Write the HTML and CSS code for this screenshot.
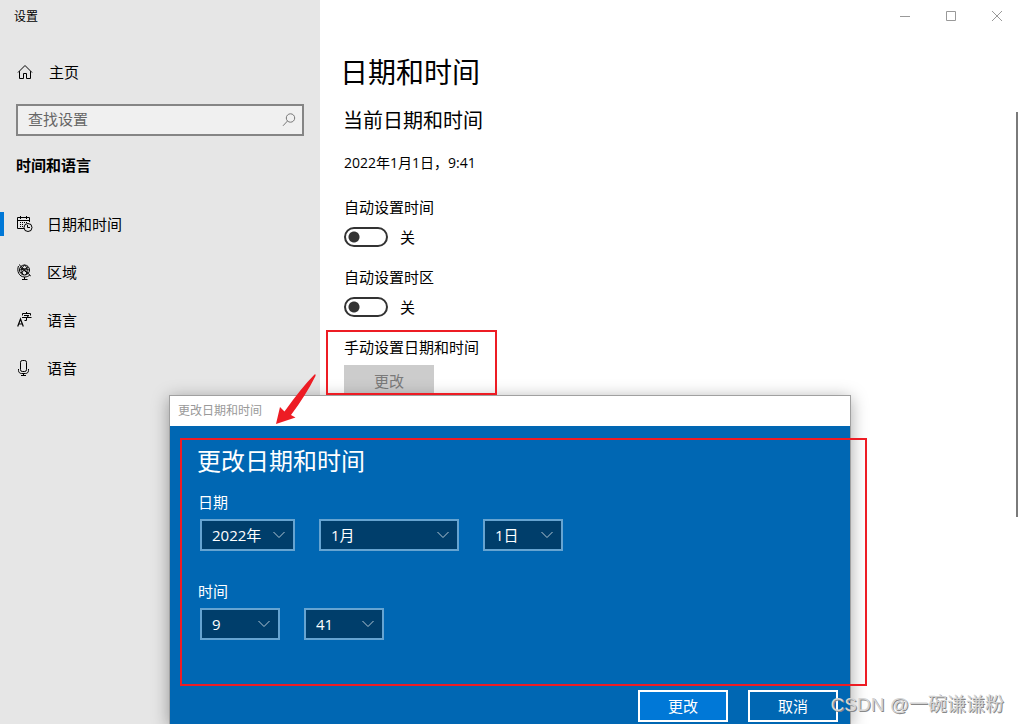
FILE: index.html
```html
<!DOCTYPE html>
<html lang="zh-CN">
<head>
<meta charset="utf-8">
<title>设置</title>
<link rel="stylesheet" href="styles.css">
</head>
<body>
<div class="window">
  <aside class="sidebar">
    <div class="app-title">设置</div>
    <a class="home" href="#">
      <svg class="icon" width="16" height="16" viewBox="0 0 16 16"><path d="M1 8.500 8 1.500 15 8.500M2.500 7.200V14.500H6.500V9.500H9.500V14.500H13.500V7.200"/></svg>
      <span>主页</span>
    </a>
    <div class="search">
      <input class="search-input" type="text" placeholder="查找设置" aria-label="查找设置">
      <svg class="search-icon" width="14" height="14" viewBox="0 0 14 14"><circle cx="8.500" cy="5" r="4.200"/><path d="M5.500 8 1 12.800"/></svg>
    </div>
    <h2 class="group">时间和语言</h2>
    <nav class="nav">
      <a class="nav-item nav-item-active" href="#">
        <svg class="icon" width="16" height="16" viewBox="0 0 16 16"><path d="M7 12.500H.5V1.500H12.500V6M.5 4.500H12.500M3.500 0V3M9.500 0V3"/><path d="M3 6.500H10M3 8.500H7M3 10.500H6" stroke-dasharray="1 1"/><circle cx="11" cy="11.500" r="4"/><path d="M10.500 9V11.500H13"/></svg>
        <span>日期和时间</span>
      </a>
      <a class="nav-item" href="#">
        <svg class="icon" width="16" height="16" viewBox="0 0 16 16"><circle cx="7.500" cy="6" r="5"/><path d="M3.500 3.500 11 9.500M4 9 11 2.800M7.500 1C3.800 4 4.300 8.500 6.500 11M7.500 1C11.200 4 10.700 8.500 8.500 11M2.500 6.500C5 4.200 10 4.200 12.500 6.500M2 .5 13.800 12M1.500 2C-.5 7 2 12.800 7.500 13 10 13 11.500 12.200 13 10.800M7.500 13V15M5 15.500H10.500"/></svg>
        <span>区域</span>
      </a>
      <a class="nav-item" href="#">
        <svg class="icon" width="16" height="16" viewBox="0 0 16 16"><path class="stroke-bold" d="M.7 14.500 3.500 7 6.300 14.500M1.700 12H5.300"/><path d="M9.500 0V1.500M5.500 3.500V1.500H13.500V3.500M7 3.500H12L9.500 5.500V8.500H7.500M5 5.500H14.500"/></svg>
        <span>语言</span>
      </a>
      <a class="nav-item" href="#">
        <svg class="icon" width="16" height="16" viewBox="0 0 16 16"><rect x="3.500" y=".5" width="6" height="11" rx="1.800"/><path d="M1.500 9V10.500C1.500 12.500 3 13.500 4.500 13.500H8.500C10 13.500 11.500 12.500 11.500 10.500V9M6.500 13.500V15.500M4 15.500H9"/></svg>
        <span>语音</span>
      </a>
    </nav>
  </aside>

  <div class="page">
    <div class="controls">
      <button class="control" aria-label="最小化"><svg width="10" height="10" viewBox="0 0 10 10"><path d="M0 5.500H10"/></svg></button>
      <button class="control" aria-label="最大化"><svg width="10" height="10" viewBox="0 0 10 10"><path d="M.5.5H9.500V9.500H.5Z"/></svg></button>
      <button class="control" aria-label="关闭"><svg width="10" height="10" viewBox="0 0 10 10"><path d="M0 0 10 10M10 0 0 10"/></svg></button>
    </div>
    <div class="scroll-area">
      <main class="content">
        <h1 class="title">日期和时间</h1>
        <h2 class="subtitle">当前日期和时间</h2>
        <p class="now">2022年1月1日，9:41</p>
        <div class="setting">
          <label for="auto-time">自动设置时间</label>
          <div class="toggle-row"><input class="toggle" id="auto-time" type="checkbox" role="switch"><span>关</span></div>
        </div>
        <div class="setting">
          <label for="auto-zone">自动设置时区</label>
          <div class="toggle-row"><input class="toggle" id="auto-zone" type="checkbox" role="switch"><span>关</span></div>
        </div>
        <div class="setting">
          <span id="manual">手动设置日期和时间</span>
          <button class="change" aria-describedby="manual" disabled>更改</button>
        </div>
      </main>
      <div class="rail"><div class="thumb"></div></div>
    </div>
  </div>

  <section class="dialog" role="dialog" aria-labelledby="dialog-title">
    <div class="dialog-bar">更改日期和时间</div>
    <div class="dialog-body">
      <h2 class="dialog-title" id="dialog-title">更改日期和时间</h2>
      <fieldset class="fields">
        <legend class="legend">日期</legend>
        <div class="selects">
          <div class="select select-year"><select aria-label="年"><option>2022年</option></select><svg class="chevron" width="12" height="8" viewBox="0 0 12 8"><path d="M.5 1 6 6.500 11.500 1"/></svg></div>
          <div class="select select-month"><select aria-label="月"><option>1月</option></select><svg class="chevron" width="12" height="8" viewBox="0 0 12 8"><path d="M.5 1 6 6.500 11.500 1"/></svg></div>
          <div class="select"><select aria-label="日"><option>1日</option></select><svg class="chevron" width="12" height="8" viewBox="0 0 12 8"><path d="M.5 1 6 6.500 11.500 1"/></svg></div>
        </div>
      </fieldset>
      <fieldset class="fields">
        <legend class="legend">时间</legend>
        <div class="selects">
          <div class="select"><select aria-label="时"><option>9</option></select><svg class="chevron" width="12" height="8" viewBox="0 0 12 8"><path d="M.5 1 6 6.500 11.500 1"/></svg></div>
          <div class="select"><select aria-label="分"><option>41</option></select><svg class="chevron" width="12" height="8" viewBox="0 0 12 8"><path d="M.5 1 6 6.500 11.500 1"/></svg></div>
        </div>
      </fieldset>
      <div class="actions">
        <button class="action action-primary">更改</button>
        <button class="action">取消</button>
      </div>
    </div>
  </section>

  <div class="mark mark-setting"></div>
  <div class="mark mark-dialog"></div>
  <svg class="arrow" width="42" height="54" viewBox="0 0 42 54"><path d="M0 51 4 34 8.500 38.500Q26 14 38.500 1.500Q40 .5 39.500 3 30 22 15 42L19.500 44.500Z"/></svg>
  <div class="watermark">CSDN @一碗谦谦粉</div>
</div>
</body>
</html>
```
FILE: styles.css
```css
* {
  box-sizing: border-box;
}

body {
  margin: 0;
  color: #000;
  font: 15px/24px "Noto Sans CJK SC", sans-serif;
}

h1,
h2,
p {
  margin: 0;
  font-weight: 400;
}

button,
input,
select {
  font: inherit;
}

a {
  color: inherit;
  text-decoration: none;
}

.window {
  position: relative;
  display: flex;
  height: 100vh;
  overflow: hidden;
  background: #fff;
}

/* Sidebar */
.sidebar {
  flex: 0 0 320px;
  background: #e6e6e6;
}

.app-title {
  height: 32px;
  padding-left: 14px;
  font-size: 12px;
  line-height: 32px;
}

.icon {
  fill: none;
  stroke: #000;
  flex: none;
}

.stroke-bold {
  stroke-width: 1.2;
}

.home,
.nav-item {
  display: flex;
  align-items: center;
  height: 48px;
  padding-left: 17px;
  gap: 14px;
}

.home {
  margin-top: 16px;
  gap: 16px;
}

.search {
  display: flex;
  align-items: center;
  height: 32px;
  margin: 8px 16px 14px;
  padding: 0 6px 0 10px;
  border: 2px solid #858585;
  background: #f0f0f0;
}

.search-input {
  flex: 1;
  min-width: 0;
  padding: 0 0 2px;
  border: 0;
  outline: 0;
  background: none;
}

.search-input::placeholder {
  color: #666;
  opacity: 1;
}

.search-icon {
  fill: none;
  stroke: #777;
}

.group {
  padding-left: 16px;
  font-size: 15px;
  font-weight: 700;
  line-height: 30px;
}

.nav {
  margin-top: 20px;
}

.nav-item-active {
  background: linear-gradient(#0078d7, #0078d7) 0 50% / 4px 24px no-repeat;
}

/* Page */
.page {
  display: flex;
  flex: 1;
  flex-direction: column;
  min-width: 0;
}

.controls {
  display: flex;
  justify-content: flex-end;
}

.control {
  display: grid;
  width: 46px;
  height: 32px;
  padding: 0;
  border: 0;
  background: none;
  place-items: center;
}

.control svg {
  fill: none;
  stroke: #999;
}

.scroll-area {
  display: flex;
  flex: 1;
}

.content {
  flex: 1;
  padding: 19px 24px 0;
}

.title {
  margin: 0 -4px;
  font-size: 28px;
  line-height: 40px;
}

.subtitle {
  margin: 15px -1px 17px;
  font-size: 20px;
  line-height: 28px;
}

.now {
  margin-bottom: 20px;
  font-family: "Open Sans", "Noto Sans CJK SC", sans-serif;
  font-size: 14px;
}

.setting {
  display: flex;
  flex-direction: column;
  align-items: flex-start;
  gap: 6px;
  margin-bottom: 16px;
}

.toggle-row {
  display: flex;
  align-items: center;
  gap: 12px;
}

.toggle {
  width: 44px;
  height: 20px;
  margin: 0;
  border: 2px solid #333;
  border-radius: 10px;
  background: radial-gradient(circle at 8px 8px, #333 5px, transparent 6px);
  appearance: none;
}

.change {
  width: 90px;
  height: 32px;
  border: 0;
  color: #7a7a7a;
  background: #ccc;
}

.rail {
  padding: 80px 2px 0 0;
}

.thumb {
  width: 2px;
  height: 405px;
  background: #7a7a7a;
}

/* Dialog */
.dialog {
  position: absolute;
  top: 395px;
  right: 169px;
  bottom: 0;
  left: 169px;
  display: flex;
  flex-direction: column;
  border: 1px solid #a0a0a0;
  border-bottom: 0;
  background: #fff;
  box-shadow: 0 3px 16px rgba(0, 0, 0, .35);
}

.dialog-bar {
  height: 30px;
  padding-left: 8px;
  color: #999;
  font-size: 12px;
  line-height: 28px;
}

.dialog-body {
  display: flex;
  flex: 1;
  flex-direction: column;
  padding: 18px 12px 2px 28px;
  color: #fff;
  background: #0067b3;
}

.dialog-title {
  margin: 0 -1px 16px;
  font-size: 24px;
  line-height: 32px;
}

.fields {
  min-width: 0;
  margin: 0 0 30px;
  padding: 0;
  border: 0;
}

.legend {
  padding: 0;
  line-height: 20px;
}

.selects {
  display: flex;
  gap: 24px;
  padding: 7px 0 0 2px;
}

.select {
  display: grid;
  align-items: center;
  width: 80px;
}

.select-year {
  width: 95px;
}

.select-month {
  width: 140px;
}

.select select,
.chevron {
  grid-area: 1 / 1;
}

.select select {
  width: 100%;
  height: 32px;
  padding: 0 10px;
  border: 2px solid #66a4d1;
  border-radius: 0;
  color: #fff;
  background: #003e6b;
  font-family: "Open Sans", "Noto Sans CJK SC", sans-serif;
  appearance: none;
}

.chevron {
  margin-right: 10px;
  justify-self: end;
  fill: none;
  stroke: #b2c5d3;
  pointer-events: none;
}

.actions {
  display: flex;
  justify-content: flex-end;
  gap: 20px;
  margin-top: auto;
}

.action {
  width: 90px;
  height: 32px;
  border: 2px solid #fff;
  color: #fff;
  background: #0067b3;
}

.action-primary {
  background: #0078d7;
}

/* Annotations */
.mark {
  position: absolute;
  border: 2px solid #ed1c24;
  pointer-events: none;
}

.mark-setting {
  top: 330px;
  left: 326px;
  width: 171px;
  height: 65px;
}

.mark-dialog {
  top: 438px;
  right: 153px;
  bottom: 38px;
  left: 180px;
}

.arrow {
  position: absolute;
  top: 373px;
  left: 276px;
  fill: #ed1c24;
}

.watermark {
  position: absolute;
  right: 16px;
  bottom: 4px;
  color: #d4d4d4;
  font-family: "Liberation Sans", "Noto Sans CJK SC", sans-serif;
  font-size: 19px;
  line-height: 30px;
  text-shadow: 1px 1px 0 #888;
}
```
